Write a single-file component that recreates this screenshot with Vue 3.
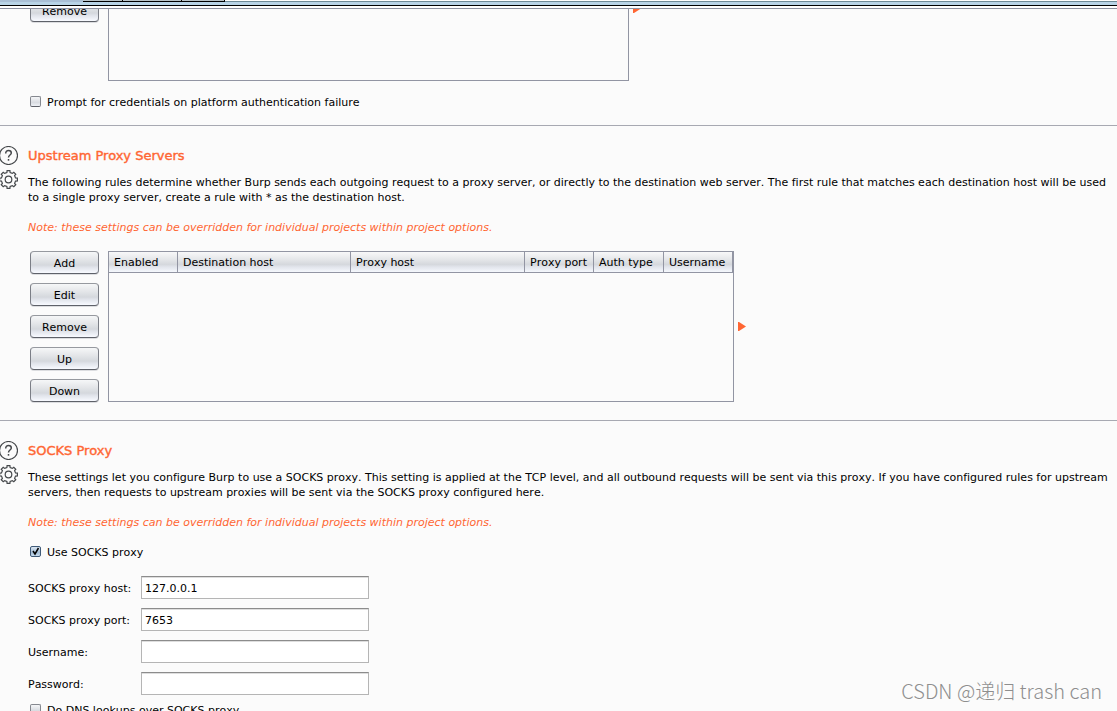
<script setup>
import { ref } from 'vue'

const promptForCredentials = ref(false)
const useSocks = ref(true)
const dnsOverSocks = ref(false)

const ruleActions = ['Add', 'Edit', 'Remove', 'Up', 'Down']
const columns = [
  { label: 'Enabled', size: 'c69' },
  { label: 'Destination host', size: 'c173' },
  { label: 'Proxy host', size: 'c174' },
  { label: 'Proxy port', size: 'c69' },
  { label: 'Auth type', size: 'c70' },
  { label: 'Username', size: 'c69' },
]
const fields = ref([
  { id: 'host', label: 'SOCKS proxy host:', type: 'text', value: '127.0.0.1' },
  { id: 'port', label: 'SOCKS proxy port:', type: 'text', value: '7653' },
  { id: 'user', label: 'Username:', type: 'text', value: '' },
  { id: 'pass', label: 'Password:', type: 'password', value: '' },
])

const sections = [
  {
    id: 'upstream',
    title: 'Upstream Proxy Servers',
    lines: [
      'The following rules determine whether Burp sends each outgoing request to a proxy server, or directly to the destination web server. The first rule that matches each destination host will be used',
      'to a single proxy server, create a rule with * as the destination host.',
    ],
  },
  {
    id: 'socks',
    title: 'SOCKS Proxy',
    lines: [
      'These settings let you configure Burp to use a SOCKS proxy. This setting is applied at the TCP level, and all outbound requests will be sent via this proxy. If you have configured rules for upstream',
      'servers, then requests to upstream proxies will be sent via the SOCKS proxy configured here.',
    ],
  },
]

// Outline of an eight-toothed gear centred on (10, 10).
function gearPath() {
  const pts = []
  const at = (r, deg) => {
    const a = (deg * Math.PI) / 180
    pts.push(`${(10 + r * Math.cos(a)).toFixed(2)} ${(10 + r * Math.sin(a)).toFixed(2)}`)
  }
  for (let i = 0; i < 8; i++) {
    const c = i * 45
    at(7.2, c - 13)
    at(9, c - 9)
    at(9, c + 9)
    at(7.2, c + 13)
  }
  return `M${pts.join('L')}Z`
}
const gear = gearPath()
</script>

<template>
  <div class="window">
    <div class="tabstrip">
      <span class="tabs"><i class="t1"></i><i class="t2"></i><i class="t3"></i></span>
    </div>
    <main class="panel">
      <section class="auth">
        <div class="auth-row">
          <button type="button" class="btn">Remove</button>
          <div class="auth-list"></div>
          <svg class="arrow" viewBox="0 0 8 9" aria-hidden="true"><path d="M0 0H1L8 4.5L1 9H0Z" /></svg>
        </div>
        <label class="check">
          <input v-model="promptForCredentials" type="checkbox" />
          <span>Prompt for credentials on platform authentication failure</span>
        </label>
      </section>

      <section v-for="s in sections" :key="s.id" class="section">
        <div class="icons">
          <button type="button" class="icon" aria-label="Help">
            <svg viewBox="0.5 0.5 19 19"><circle cx="10" cy="10" r="9" /><path class="q" d="M7.2 7.9C7.2 6.1 8.3 5.1 10 5.1C11.7 5.1 12.8 6.1 12.8 7.5C12.8 9.5 10 9.6 10 11.9" /><path class="q" d="M10 13.5V15.2" /></svg>
          </button>
          <button type="button" class="icon" aria-label="Options">
            <svg viewBox="0.5 0.5 19 19"><path :d="gear" /><circle cx="10" cy="10" r="3.3" /></svg>
          </button>
        </div>
        <div class="body">
          <h2>{{ s.title }}</h2>
          <p class="desc"><template v-for="(l, i) in s.lines" :key="i">{{ l }}<br v-if="i === 0" /></template></p>
          <p class="note">Note: these settings can be overridden for individual projects within project options.</p>

          <div v-if="s.id === 'upstream'" class="rules">
            <div class="actions">
              <button v-for="a in ruleActions" :key="a" type="button" class="btn">{{ a }}</button>
            </div>
            <div class="grid">
              <table>
                <thead>
                  <tr><th v-for="c in columns" :key="c.label" :class="c.size" scope="col">{{ c.label }}</th></tr>
                </thead>
              </table>
            </div>
            <svg class="arrow" viewBox="0 0 8 9" aria-hidden="true"><path d="M0 0H1L8 4.5L1 9H0Z" /></svg>
          </div>

          <form v-else class="socks" @submit.prevent>
            <label class="check">
              <input v-model="useSocks" type="checkbox" />
              <span>Use SOCKS proxy</span>
            </label>
            <div class="fields">
              <template v-for="f in fields" :key="f.id">
                <label :for="f.id">{{ f.label }}</label>
                <input :id="f.id" v-model="f.value" :type="f.type" />
              </template>
            </div>
            <label class="check">
              <input v-model="dnsOverSocks" type="checkbox" />
              <span>Do DNS lookups over SOCKS proxy</span>
            </label>
          </form>
        </div>
      </section>
    </main>
    <div class="watermark">CSDN @递归 trash can</div>
  </div>
</template>

<style>
body {
  background: #fbfbfb;
}
</style>

<style scoped>
* {
  box-sizing: border-box;
}
.window {
  position: relative;
  display: flex;
  flex-direction: column;
  height: 100vh;
  overflow: hidden;
  background: #fbfbfb;
  color: #000;
  font: 11px/15px "DejaVu Sans", sans-serif;
  font-kerning: none;
  font-variant-ligatures: none;
}
.tabstrip {
  flex: none;
  height: 9px;
  background: linear-gradient(#fff 0 1px, #6e8a97 1px 2px, #b8d3e6 2px 5px, #000 5px 6px, #fff 6px 8px, #8c90a0 8px 9px);
}
.tabs {
  display: flex;
  width: 225px;
  height: 2px;
  padding-left: 83px;
  background: #a9bfd5;
}
.tabs i {
  height: 2px;
  border: solid #000;
  border-width: 0 1px 1px 0;
  background: #b9c4c9;
}
.t1 { width: 40px; }
.t2 { width: 59px; }
.t3 { width: 43px; }
.panel {
  flex: 1;
  min-height: 0;
  overflow: hidden;
}
.auth {
  padding: 0 0 15px 30px;
}
.auth-row {
  display: flex;
  gap: 9px;
  height: 82px;
  margin-top: -10px;
  margin-bottom: 14px;
}
.auth-list {
  width: 521px;
  border: 1px solid #9295a3;
}
.auth .arrow {
  margin: 5px 0 0 -5px;
}
.arrow {
  flex: none;
  width: 8px;
  height: 9px;
  fill: #ff6633;
}
.btn {
  flex: none;
  width: 69px;
  height: 23px;
  padding: 1px 0 0;
  border: 1px solid;
  border-color: #96999f #7b7e86 #5e6169;
  border-radius: 4px;
  background: linear-gradient(#f6f7f8, #e4e6e9 35%, #d5d8dd 62%, #e2e5ec 75%, #f8faff);
  box-shadow: 0 1px 0 #dcdde0;
  color: #000;
  font: inherit;
}
.check {
  display: flex;
  align-items: flex-start;
  gap: 6px;
  height: 15px;
  white-space: nowrap;
}
.check input {
  appearance: none;
  width: 11px;
  height: 11px;
  margin: 1px 0 0;
  border: 1px solid;
  border-color: #85888f #85888f #5e6169;
  border-radius: 2px;
  background: linear-gradient(#f5f6f8, #d9dce1 60%, #eef1f6);
}
.check input:checked {
  border-color: #3f5a78;
  background: url("data:image/svg+xml,%3Csvg xmlns='http://www.w3.org/2000/svg' viewBox='0 0 9 9'%3E%3Cpath d='M2 4L4 7L7.5 1' fill='none' stroke='%23000' stroke-width='1.5'/%3E%3C/svg%3E"), linear-gradient(#dbe6f1, #a4bdd6 60%, #c7dcef);
}
.section {
  display: flex;
  border-top: 1px solid #a7a9b2;
  padding: 20px 0 18px;
}
.icons {
  flex: none;
  display: flex;
  flex-direction: column;
  gap: 5px;
  width: 28px;
}
.icon {
  width: 19px;
  height: 19px;
  margin-left: -1px;
  padding: 0;
  border: 0;
  background: none;
}
.icon svg {
  display: block;
  width: 19px;
  height: 19px;
  fill: none;
  stroke: #45484b;
  stroke-width: 1.2;
}
.icon .q {
  stroke-width: 1.5;
}
.body {
  flex: 1;
  min-width: 0;
}
h2 {
  margin: 0 0 9px;
  color: #ff6633;
  font: 13px/20px "DejaVu Sans", sans-serif;
  -webkit-text-stroke: 0.4px #ff6633;
}
p {
  margin: 0 0 15px;
  white-space: nowrap;
}
.note {
  color: #ff6633;
  font-style: italic;
}
.rules {
  display: flex;
  align-items: center;
  margin: 16px 0 0 2px;
}
.actions {
  display: flex;
  flex-direction: column;
  gap: 9px;
}
.grid {
  align-self: stretch;
  width: 626px;
  margin: 0 4px 0 9px;
  border: 1px solid #9295a3;
}
table {
  width: 100%;
  table-layout: fixed;
  border-collapse: separate;
  border-spacing: 0;
}
th {
  height: 21px;
  padding: 0 0 0 5px;
  border: solid #9295a3;
  border-width: 0 1px 1px 0;
  background: linear-gradient(#f8f8f9, #e3e5e8 40%, #d5d8dd 62%, #e2e5ec 75%, #f5f8fd);
  font-weight: normal;
  text-align: left;
  white-space: nowrap;
}
.c69 { width: 69px; }
.c70 { width: 70px; }
.c173 { width: 173px; }
.c174 { width: 174px; }
.socks > .check {
  margin-left: 2px;
}
.fields {
  display: grid;
  grid-template-columns: 113px 228px;
  row-gap: 9px;
  align-items: center;
  margin: 16px 0 8px;
}
.fields label {
  padding-top: 1px;
}
.fields input {
  width: 100%;
  height: 23px;
  padding: 1px 3px 0;
  border: 1px solid #b5b5b5;
  border-top-color: #8c8c8c;
  border-radius: 0;
  outline: 0;
  background: #fff;
  box-shadow: inset 0 1px 0 #dedede;
  color: #000;
  font: inherit;
}
.watermark {
  position: absolute;
  right: 15px;
  bottom: 8px;
  color: #8e8e8e;
  font: 300 20px/24px "Noto Sans CJK SC", sans-serif;
}
</style>
